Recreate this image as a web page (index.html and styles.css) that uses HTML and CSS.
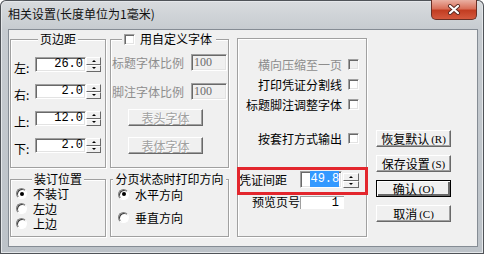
FILE: index.html
```html
<!DOCTYPE html>
<html lang="zh-CN">
<head>
    <meta charset="UTF-8">
    <title>相关设置</title>
    <link rel="stylesheet" href="styles.css">
</head>
<body>

    <div class="window">
        <div class="titlebar">
            <span class="title">相关设置(长度单位为1毫米)</span>
            <div class="close-btn">
                <svg width="14" height="11" viewBox="0 0 14 11">
                    <path d="M3 2 L11 9 M11 2 L3 9" stroke="#5a2a22" stroke-width="4" stroke-linecap="round"/>
                    <path d="M3 2 L11 9 M11 2 L3 9" stroke="#fff" stroke-width="2.2" stroke-linecap="round"/>
                </svg>
            </div>
        </div>

        <div class="client">
            <div class="left-col">
                <div class="group-row">
                    <!-- margins -->
                    <div class="group margins">
                        <div class="group-title">页边距</div>
                        <div class="spin-row first">
                            <span class="spin-label">左:</span>
                            <div class="edit num">26.0</div>
                            <div class="updown"><span class="up"></span><span class="down"></span></div>
                        </div>
                        <div class="spin-row">
                            <span class="spin-label">右:</span>
                            <div class="edit num">2.0</div>
                            <div class="updown"><span class="up"></span><span class="down"></span></div>
                        </div>
                        <div class="spin-row">
                            <span class="spin-label">上:</span>
                            <div class="edit num">12.0</div>
                            <div class="updown"><span class="up"></span><span class="down"></span></div>
                        </div>
                        <div class="spin-row">
                            <span class="spin-label">下:</span>
                            <div class="edit num">2.0</div>
                            <div class="updown"><span class="up"></span><span class="down"></span></div>
                        </div>
                    </div>

                    <!-- custom font -->
                    <div class="group fonts">
                        <div class="group-title check-title"><span class="checkbox"></span>用自定义字体</div>
                        <div class="field-row first">
                            <span class="field-label disabled">标题字体比例</span>
                            <div class="edit small disabled">100</div>
                        </div>
                        <div class="field-row">
                            <span class="field-label disabled">脚注字体比例</span>
                            <div class="edit small disabled">100</div>
                        </div>
                        <div class="btn font-btn disabled first">表头字体</div>
                        <div class="btn font-btn disabled">表体字体</div>
                    </div>
                </div>

                <div class="group-row">
                    <div class="group binding">
                        <div class="group-title">装订位置</div>
                        <div class="radio-row"><span class="radio checked"></span>不装订</div>
                        <div class="radio-row"><span class="radio"></span>左边</div>
                        <div class="radio-row"><span class="radio"></span>上边</div>
                    </div>
                    <div class="group direction">
                        <div class="group-title">分页状态时打印方向</div>
                        <div class="radio-row"><span class="radio checked"></span>水平方向</div>
                        <div class="radio-row lower"><span class="radio"></span>垂直方向</div>
                    </div>
                </div>
            </div>

            <!-- print options -->
            <div class="group options">
                <div class="opt-row first disabled">横向压缩至一页<span class="checkbox disabled"></span></div>
                <div class="opt-row">打印凭证分割线<span class="checkbox"></span></div>
                <div class="opt-row">标题脚注调整字体<span class="checkbox"></span></div>
                <div class="opt-row gap">按套打方式输出<span class="checkbox"></span></div>

                <div class="gap-row">
                    <span class="gap-label">凭证间距</span>
                    <div class="edit num gap-edit"><span class="selected">49.8</span></div>
                    <div class="updown tall"><span class="up"></span><span class="down"></span></div>
                </div>
                <div class="page-row">
                    <span class="page-label">预览页号</span>
                    <div class="page-edit num">1</div>
                </div>

                <div class="highlight"></div>
            </div>

            <div class="buttons">
                <div class="btn">恢复默认<span class="key">(R)</span></div>
                <div class="btn">保存设置<span class="key">(S)</span></div>
                <div class="btn default">确认<span class="key">(O)</span></div>
                <div class="btn">取消<span class="key">(C)</span></div>
            </div>
        </div>
    </div>

</body>
</html>
```

FILE: styles.css
```css
/* General */
* {
    box-sizing: border-box;
}

body {
    margin: 0;
    font-family: "Noto Sans CJK SC", "Liberation Sans", sans-serif;
    font-size: 12px;
    color: #000;
}

/* Window frame */
.window {
    width: 484px;
    height: 254px;
    display: flex;
    flex-direction: column;
    padding: 0 6px 7px 8px;
    background: linear-gradient(#d9dcdf, #c6cbd0 30px, #bcc2c8);
    box-shadow: inset 0 0 0 1px #4f5358, inset 0 0 0 2px #e4e7ea;
    border-radius: 6px 6px 0 0;
}

.titlebar {
    height: 29px;
    display: flex;
    align-items: flex-start;
}

.title {
    margin-top: 6px;
    line-height: 16px;
    font-size: 12px;
    color: #111;
}

.close-btn {
    margin-left: auto;
    margin-right: 1px;
    width: 46px;
    height: 20px;
    border: 1px solid #6a2f25;
    border-top: none;
    border-radius: 0 0 5px 5px;
    background: linear-gradient(#eab0a3, #d9705a 45%, #c23d22 55%, #d4593e);
    display: flex;
    align-items: center;
    justify-content: center;
}

/* Client area */
.client {
    flex: 1;
    display: flex;
    align-items: flex-start;
    background: #f0f0f0;
    border: 1px solid #858c94;
    padding-left: 1px;
}

.left-col {
    margin-top: 9px;
    display: flex;
    flex-direction: column;
    gap: 11px;
}

.group-row {
    display: flex;
    gap: 4px;
}

/* Group boxes */
.group {
    position: relative;
    border: 1px solid #a0a0a0;
    box-shadow: 1px 1px 0 #fff, inset 1px 1px 0 #fff;
}

.group-title {
    margin: -8px auto 0;
    width: fit-content;
    padding: 0 2px;
    line-height: 14px;
    white-space: nowrap;
    background: #f0f0f0;
    position: relative;
}

.margins {
    width: 96px;
    height: 129px;
}

.fonts {
    width: 119px;
    height: 129px;
}

.binding {
    width: 96px;
    height: 58px;
}

.direction {
    width: 119px;
    height: 58px;
}

.options {
    margin-top: 8px;
    margin-left: 8px;
    width: 130px;
    height: 199px;
    padding-right: 7px;
}

/* Edit controls */
.edit {
    height: 15px;
    background: #fff;
    border: 1px solid;
    border-color: #a0a0a0 #fff #fff #a0a0a0;
    box-shadow: inset 1px 1px 0 #696969, inset -1px -1px 0 #e3e3e3;
    line-height: 13px;
    padding: 0 2px;
}

.num {
    font-family: "Liberation Mono", monospace;
    font-size: 12px;
    text-align: right;
}

.edit.disabled {
    background: #f0f0f0;
    color: #6d6d6d;
}

.edit.small {
    width: 36px;
    height: 17px;
    line-height: 15px;
    margin-left: 7px;
    font-family: "Liberation Serif", serif;
    font-size: 12px;
}

.updown {
    width: 15px;
    height: 15px;
    display: flex;
    flex-direction: column;
}

.updown span {
    flex: 1;
    background: #f0f0f0;
    border: 1px solid;
    border-color: #fff #696969 #696969 #fff;
    display: flex;
    align-items: center;
    justify-content: center;
}

.updown .up::after,
.updown .down::after {
    content: "";
    width: 0;
    height: 0;
    border-left: 2px solid transparent;
    border-right: 2px solid transparent;
}

.updown .up::after {
    border-bottom: 2px solid #000;
}

.updown .down::after {
    border-top: 2px solid #000;
}

/* Margin rows */
.spin-row {
    display: flex;
    align-items: flex-start;
    height: 15px;
    margin: 12px 0 0 3px;
}

.spin-row.first {
    margin-top: 11px;
}

.spin-label {
    width: 21px;
    padding-top: 3px;
    line-height: 15px;
}

.spin-row .edit {
    width: 51px;
}

/* Font group */
.check-title {
    margin-left: 11px;
    display: flex;
    align-items: center;
    gap: 5px;
    padding-right: 4px;
}

.field-row {
    display: flex;
    align-items: center;
    margin: 12px 0 0 1px;
}

.field-row.first {
    margin-top: 8px;
}

.field-label {
    width: 72px;
    line-height: 16px;
    white-space: nowrap;
}

.disabled {
    color: #8d8d8d;
}

.font-btn {
    width: 73px;
    height: 18px;
    margin: 11px 0 0 17px;
    color: #a0a0a0;
    text-shadow: 1px 1px 0 #fff;
}

.font-btn.first {
    margin-top: 9px;
}

/* Check boxes & radios */
.checkbox {
    display: inline-block;
    width: 11px;
    height: 11px;
    background: #fff;
    border: 1px solid;
    border-color: #a0a0a0 #fff #fff #a0a0a0;
    box-shadow: inset 1px 1px 0 #696969, inset -1px -1px 0 #e3e3e3;
}

.checkbox.disabled {
    background: #f0f0f0;
}

.radio-row {
    display: flex;
    align-items: center;
    gap: 6px;
    height: 15px;
    line-height: 15px;
    margin-left: 5px;
}

.direction .radio-row {
    height: 16px;
    margin-left: 7px;
}

.radio-row.lower {
    margin-top: 7px;
}

.radio {
    width: 11px;
    height: 11px;
    border-radius: 50%;
    background: #fff;
    border: 1px solid;
    border-color: #808080 #fff #fff #808080;
    box-shadow: inset 1px 1px 0 #404040;
    display: flex;
    align-items: center;
    justify-content: center;
}

.radio.checked::after {
    content: "";
    width: 4px;
    height: 4px;
    border-radius: 50%;
    background: #000;
}

/* Print options */
.opt-row {
    height: 20px;
    display: flex;
    align-items: center;
    justify-content: flex-end;
    gap: 6px;
    white-space: nowrap;
}

.opt-row.first {
    margin-top: 15px;
}

.opt-row.gap {
    margin-top: 14px;
}

.gap-row {
    display: flex;
    align-items: flex-end;
    margin-top: 23px;
}

.gap-label {
    width: 63px;
    padding-left: 1px;
    line-height: 17px;
    align-self: center;
    white-space: nowrap;
}

.gap-edit {
    width: 43px;
    height: 17px;
    line-height: 15px;
}

.selected {
    background: #3399ff;
    color: #fff;
    padding: 1px 0;
}

.updown.tall {
    margin-left: 1px;
    width: 16px;
}

.page-row {
    display: flex;
    align-items: center;
    margin-top: 7px;
}

.page-label {
    width: 62px;
    padding-left: 14px;
    line-height: 14px;
    white-space: nowrap;
}

.page-edit {
    width: 44px;
    height: 13px;
    background: #fff;
    border-top: 1px solid #a0a0a0;
    border-left: 1px solid #a0a0a0;
    line-height: 12px;
    padding-right: 5px;
}

/* annotation box over the spacing field */
.highlight {
    position: absolute;
    left: -1px;
    top: 128px;
    width: 131px;
    height: 28px;
    border: 3px solid #e3262d;
}

/* Buttons */
.buttons {
    margin: 100px 0 0 9px;
    display: flex;
    flex-direction: column;
    gap: 8px;
}

.btn {
    width: 75px;
    height: 17px;
    background: #f0f0f0;
    border: 1px solid;
    border-color: #fff #696969 #696969 #fff;
    box-shadow: inset -1px -1px 0 #a0a0a0;
    display: flex;
    align-items: center;
    justify-content: center;
    line-height: 14px;
    white-space: nowrap;
}

.btn.default {
    border-color: #000;
    box-shadow: inset 1px 1px 0 #fff, inset -2px -2px 0 #696969;
}

.key {
    font-family: "Liberation Serif", serif;
    font-size: 11px;
    margin-left: 2px;
}
```
